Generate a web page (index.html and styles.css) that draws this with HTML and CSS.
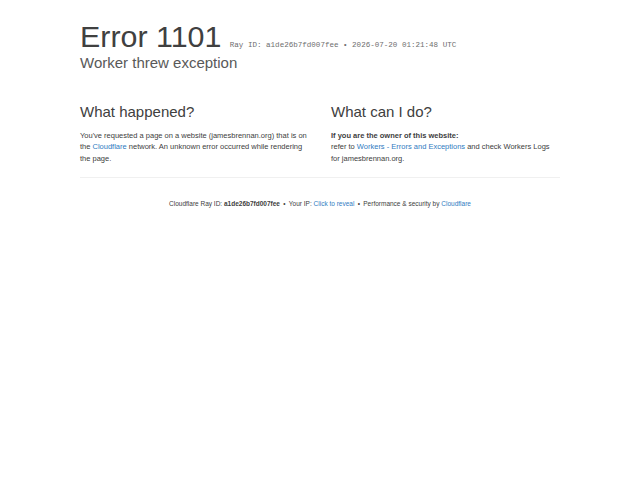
FILE: index.html
```html
<!DOCTYPE html>
<html lang="en">
<head>
<meta charset="utf-8">
<title>Worker threw exception | jamesbrennan.org | Cloudflare</title>
<link rel="stylesheet" href="styles.css">
</head>
<body>
<div class="wrapper">
  <header class="header">
    <h1 class="headline"><span>Error</span> <span>1101</span> <small class="ray">Ray ID: a1de26b7fd007fee &bull; 2026-07-20 01:21:48 UTC</small></h1>
    <h2 class="subheadline">Worker threw exception</h2>
  </header>
  <section class="columns">
    <div class="column">
      <h2 class="col-title">What happened?</h2>
      <p class="text">You've requested a page on a website (jamesbrennan.org) that is on the <a class="link" href="#">Cloudflare</a> network. An unknown error occurred while rendering the page.</p>
    </div>
    <div class="column">
      <h2 class="col-title">What can I do?</h2>
      <p class="text"><strong>If you are the owner of this website:</strong><br>refer to <a class="link" href="#">Workers - Errors and Exceptions</a> and check Workers Logs for jamesbrennan.org.</p>
    </div>
  </section>
  <footer class="footer">
    <p class="footer-text">
      <span>Cloudflare Ray ID: <strong>a1de26b7fd007fee</strong></span><span class="sep">&bull;</span><span>Your IP: <a class="link" href="#">Click to reveal</a></span><span class="sep">&bull;</span><span>Performance &amp; security by <a class="link" href="#">Cloudflare</a></span>
    </p>
  </footer>
</div>
</body>
</html>
```
FILE: styles.css
```css
html, body {
  margin: 0;
  padding: 0;
  background: #ffffff;
}
body {
  font-family: "Liberation Sans", Arial, sans-serif;
  color: #404040;
}
.wrapper {
  width: 480px;
  margin: 0 auto;
}
.header {
  padding-top: 17.5px;
}
.headline {
  margin: 0;
  font-size: 30.4px;
  line-height: 36px;
  font-weight: 400;
  color: #404040;
  white-space: nowrap;
}
.ray {
  font-family: "Liberation Mono", "Courier New", monospace;
  font-size: 7.55px;
  line-height: 1;
  color: #6e6e6e;
  font-weight: 400;
}
.subheadline {
  margin: 0;
  font-size: 15px;
  line-height: 18px;
  font-weight: 400;
  color: #595959;
}
.columns {
  display: grid;
  grid-template-columns: 1fr 1fr;
  column-gap: 22px;
  padding-top: 31px;
  padding-bottom: 13.5px;
}
.col-title {
  margin: 0 0 9.5px 0;
  font-size: 15px;
  line-height: 18px;
  font-weight: 400;
  color: #404040;
}
.text {
  margin: 0;
  font-size: 7.5px;
  line-height: 11.25px;
  color: #404040;
}
.text strong {
  font-weight: 700;
}
.link {
  color: #2f7bbf;
  text-decoration: none;
}
.footer {
  border-top: 1px solid #f0f0f0;
  padding-top: 21px;
}
.footer-text {
  margin: 0;
  text-align: center;
  font-size: 6.5px;
  line-height: 9.75px;
  color: #404040;
}
.footer-text strong {
  font-weight: 700;
}
.sep {
  margin: 0 3.3px;
}
```
